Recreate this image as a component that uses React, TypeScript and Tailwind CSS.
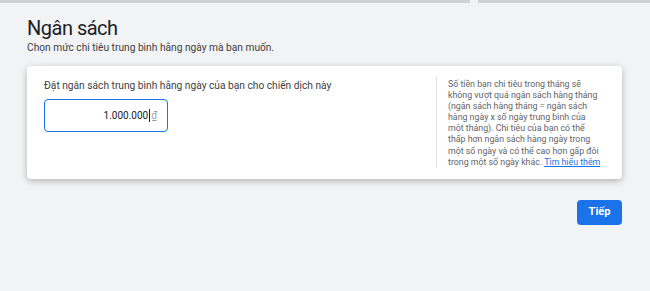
export default function App() {
  return (
    <div className="min-h-[291px] w-[650px] bg-[#f1f3f4] font-['Roboto',sans-serif] text-[#202124]">
      <div className="flex h-[3px]">
        <div className="w-[470px] bg-[#cfd1d3]" />
        <div className="w-[8px]" />
        <div className="flex-1 bg-[#cfd1d3]" />
      </div>
      <div className="pl-[27px] pt-[15px]">
        <h1 className="text-[20px] leading-[21px] font-normal tracking-[-0.5px] text-[#202124]">Ngân sách</h1>
        <p className="mt-[2px] text-[10.2px] leading-[13px] text-[#3c4043]">
          Chọn mức chi tiêu trung bình hằng ngày mà bạn muốn.
        </p>

        <div className="mt-[12px] flex h-[113px] w-[595px] rounded-[4px] bg-white shadow-[0_2px_6px_rgba(60,64,67,0.35)]">
          <div className="flex-1 pl-[17px] pt-[13px]">
            <div className="text-[10.2px] leading-[13px] text-[#3c4043]">
              Đặt ngân sách trung bình hằng ngày của bạn cho chiến dịch này
            </div>
            <div className="mt-[7px] flex h-[33px] w-[124px] items-center justify-end rounded-[4px] border border-[#1a73e8] pr-[10px] text-[10px]">
              <span className="text-[#202124]">1.000.000</span>
              <span className="mx-[1px] h-[13px] w-[1px] bg-[#202124]" />
              <span className="text-[#9aa0a6]">₫</span>
            </div>
          </div>
          <div className="my-[11px] w-[1px] bg-[#e0e0e0]" />
          <div className="w-[185px] pl-[11px] pt-[13px] text-[8.8px] leading-[11.1px] whitespace-nowrap text-[#5f6368]">
            Số tiền bạn chi tiêu trong tháng sẽ
            <br />
            không vượt quá ngân sách hàng tháng
            <br />
            (ngân sách hàng tháng = ngân sách
            <br />
            hàng ngày x số ngày trung bình của
            <br />
            một tháng). Chi tiêu của bạn có thể
            <br />
            thấp hơn ngân sách hàng ngày trong
            <br />
            một số ngày và có thể cao hơn gấp đôi
            <br />
            trong một số ngày khác.{' '}
            <a className="text-[#1a73e8] underline">Tìm hiểu thêm</a>
          </div>
        </div>

        <div className="mt-[21px] flex w-[595px] justify-end">
          <button className="h-[25px] w-[45px] rounded-[4px] bg-[#1a73e8] text-[11px] font-bold text-white">
            Tiếp
          </button>
        </div>
      </div>
    </div>
  );
}
